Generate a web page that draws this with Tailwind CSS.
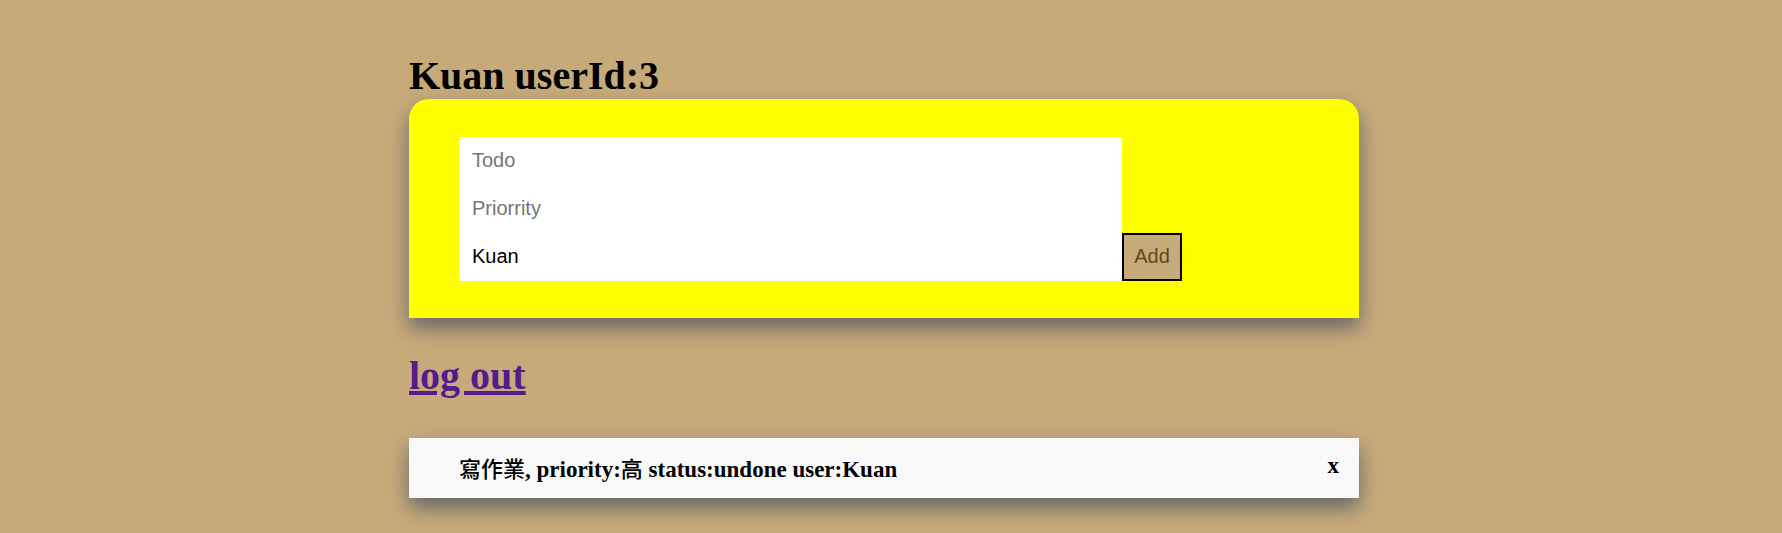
<!DOCTYPE html>
<html lang="en">
<head>
<meta charset="utf-8">
<meta name="viewport" content="width=device-width, initial-scale=1">
<title>Todo</title>
<script src="https://cdn.jsdelivr.net/npm/@tailwindcss/browser@4"></script>
</head>
<body class="min-h-screen bg-[#c7aa7a] pr-[14px] font-['Liberation_Serif','Noto_Sans_CJK_TC',serif] text-black">
<main class="mx-auto max-w-[950px] pt-[53px] pb-8">
  <h1 class="text-[40px] leading-[46px] font-bold">Kuan userId:3</h1>
  <form class="flex items-end rounded-t-[20px] bg-[#ffff00] px-[50px] pt-[38px] pb-[37px] font-['Liberation_Sans',sans-serif] text-xl shadow-[0_10px_20px_#666]">
    <div class="flex w-[78%] flex-col">
      <input type="text" aria-label="Todo" placeholder="Todo" class="h-12 bg-white px-[13px] pb-[2px] placeholder:text-[#757575] outline-none">
      <input type="text" aria-label="Priority" placeholder="Priorrity" class="h-12 bg-white px-[13px] pb-[2px] placeholder:text-[#757575] outline-none">
      <input type="text" aria-label="User" value="Kuan" class="h-12 bg-white px-[13px] pb-[2px] outline-none">
    </div>
    <button type="button" class="h-12 w-[60px] border-2 border-black bg-[#c7aa7a] pb-[2px] text-[#634620]">Add</button>
  </form>
  <h2 class="mt-[35px] text-[40px] leading-[46px] font-bold"><a href="#logout" class="text-[#551a8b] underline">log out</a></h2>
  <ul class="mt-[39px]">
    <li class="flex h-[60px] items-center justify-between bg-[#f9f9f9] pr-5 pl-[50px] text-[23px] leading-8 font-bold shadow-[0_10px_20px_#666]">
      <span class="pt-[3px]"><span class="text-[22px] font-medium">寫作業</span>, priority:<span class="text-[22px] font-medium">高</span> status:undone user:Kuan</span>
      <button type="button" aria-label="Delete" class="pb-1">x</button>
    </li>
  </ul>
</main>
</body>
</html>
